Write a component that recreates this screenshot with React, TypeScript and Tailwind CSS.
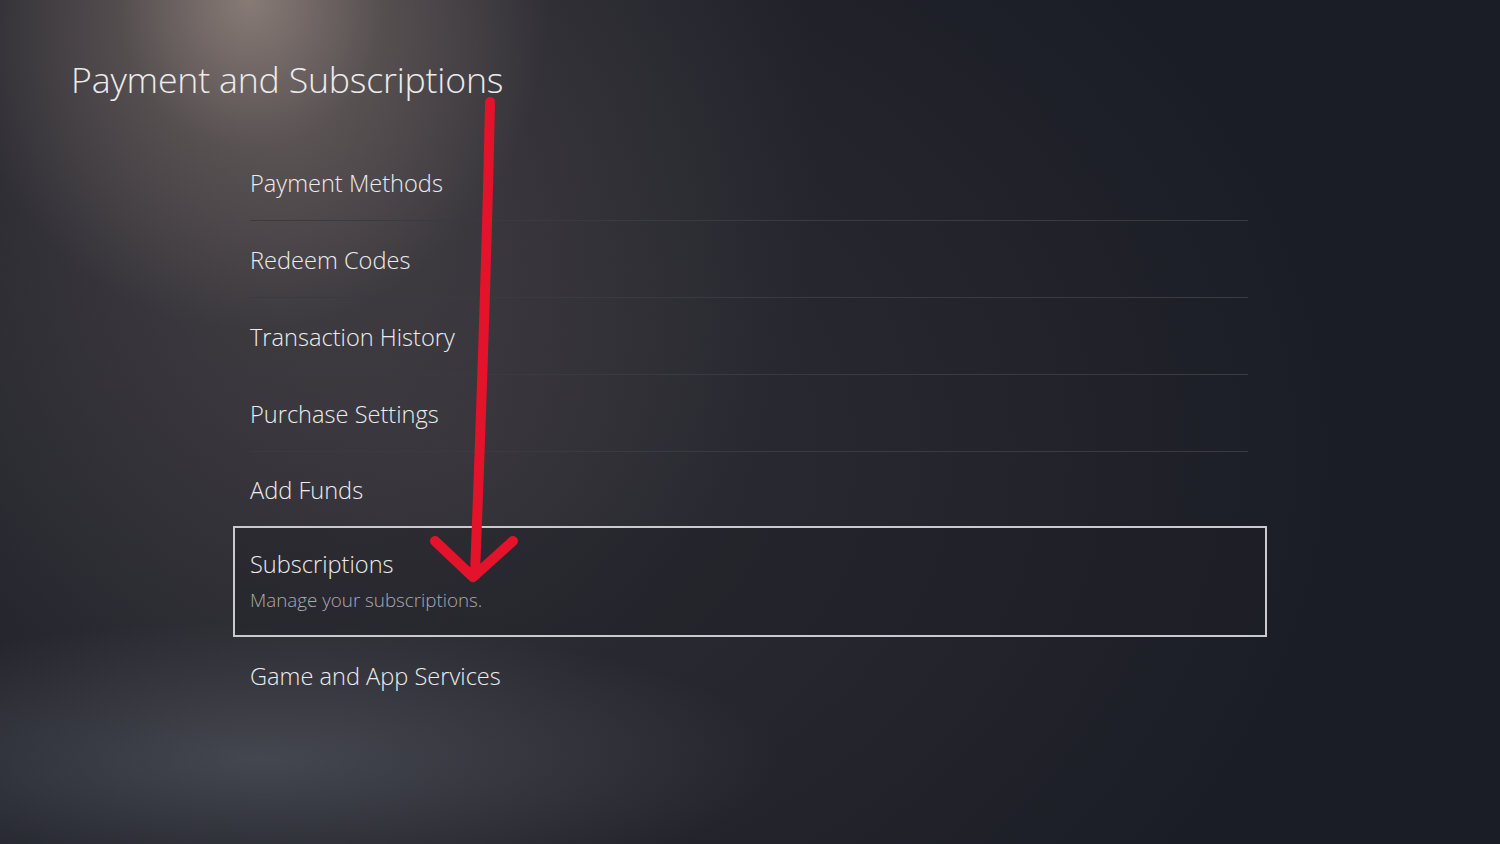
import React from "react";

const ITEMS_TOP = ["Payment Methods", "Redeem Codes", "Transaction History", "Purchase Settings", "Add Funds"];

function RedArrow() {
  return (
    <svg className="pointer-events-none absolute left-0 top-0" width="1500" height="844" viewBox="0 0 1500 844">
      <g stroke="#e3132b" strokeWidth="10" strokeLinecap="round" strokeLinejoin="round" fill="none">
        <path d="M490 102 C487 250 481 420 475 574" />
        <path d="M435 541 L473 577 L513 541" />
      </g>
    </svg>
  );
}

export default function App() {
  return (
    <div
      className="relative h-[844px] w-[1500px] overflow-hidden bg-[#1b1d26] bg-[radial-gradient(ellipse_300px_330px_at_250px_0px,rgba(150,135,128,0.85),rgba(120,108,104,0.45)_45%,transparent_100%),radial-gradient(ellipse_520px_620px_at_300px_150px,rgba(90,82,84,0.55),transparent_100%),radial-gradient(ellipse_520px_140px_at_260px_760px,rgba(95,98,108,0.55),transparent_100%),radial-gradient(ellipse_900px_700px_at_450px_450px,rgba(60,58,64,0.6),transparent_100%)] font-['Open_Sans',sans-serif] text-[#ececee]"
    >
      <h1 className="pl-[71px] pt-[57px] text-[35.7px] font-light leading-[44px] tracking-[-0.2px]">
        Payment and Subscriptions
      </h1>

      <div className="ml-[233px] mt-[43px] w-[1034px]">
        {ITEMS_TOP.map((label, i) => {
          const last = i === ITEMS_TOP.length - 1;
          return (
            <div key={label} className="px-[17px] pr-[19px]">
              <div
                className={`flex items-center pt-[3px] text-[23.6px] font-light leading-none ${
                  last ? "h-[74px]" : "h-[77px] border-b border-[#3a3b42]"
                }`}
              >
                {label}
              </div>
            </div>
          );
        })}

        <div className="flex h-[111px] flex-col border-2 border-[#c9c9ce] bg-[#1e1f26]/40 px-[15px] pt-[21px]">
          <span className="text-[23.6px] font-light leading-[30px]">Subscriptions</span>
          <span className="mt-[8px] text-[18.8px] font-light leading-[26px] text-[#a9aab0]">
            Manage your subscriptions.
          </span>
        </div>

        <div className="px-[17px]">
          <div className="flex h-[77px] items-center pt-[2px] text-[23.6px] font-light leading-none">
            Game and App Services
          </div>
        </div>
      </div>

      <RedArrow />
    </div>
  );
}
